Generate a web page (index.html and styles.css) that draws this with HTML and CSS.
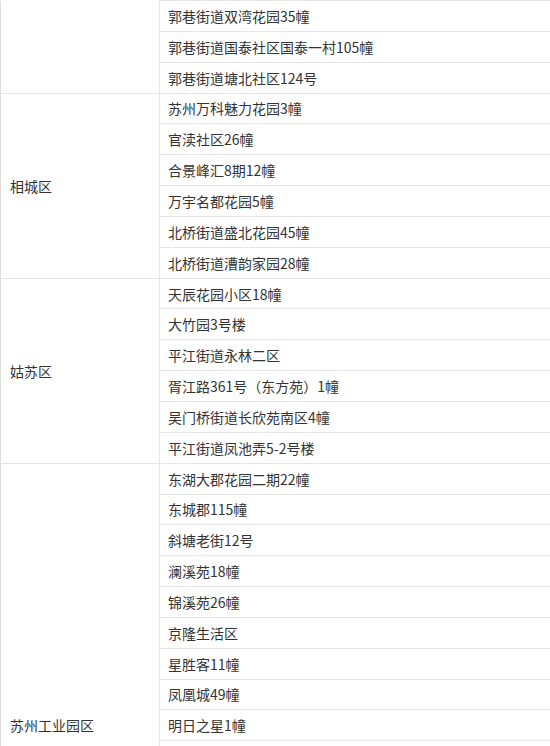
FILE: index.html
```html
<!DOCTYPE html>
<html lang="zh-CN">
<head>
<meta charset="utf-8">
<title>小区列表</title>
<link rel="stylesheet" href="styles.css">
</head>
<body>
<table class="list">
  <colgroup><col class="col-area"><col class="col-addr"></colgroup>
  <tbody>
    <tr><td class="area area-cont" rowspan="3"></td><td>郭巷街道双湾花园35幢</td></tr>
    <tr><td>郭巷街道国泰社区国泰一村105幢</td></tr>
    <tr><td>郭巷街道塘北社区124号</td></tr>

    <tr><td class="area" rowspan="6">相城区</td><td>苏州万科魅力花园3幢</td></tr>
    <tr><td>官渎社区26幢</td></tr>
    <tr><td>合景峰汇8期12幢</td></tr>
    <tr><td>万宇名都花园5幢</td></tr>
    <tr><td>北桥街道盛北花园45幢</td></tr>
    <tr><td>北桥街道漕韵家园28幢</td></tr>

    <tr><td class="area" rowspan="6">姑苏区</td><td>天辰花园小区18幢</td></tr>
    <tr><td>大竹园3号楼</td></tr>
    <tr><td>平江街道永林二区</td></tr>
    <tr><td>胥江路361号（东方苑）1幢</td></tr>
    <tr><td>吴门桥街道长欣苑南区4幢</td></tr>
    <tr><td>平江街道凤池弄5-2号楼</td></tr>

    <tr><td class="area" rowspan="17">苏州工业园区</td><td>东湖大郡花园二期22幢</td></tr>
    <tr><td>东城郡115幢</td></tr>
    <tr><td>斜塘老街12号</td></tr>
    <tr><td>澜溪苑18幢</td></tr>
    <tr><td>锦溪苑26幢</td></tr>
    <tr><td>京隆生活区</td></tr>
    <tr><td>星胜客11幢</td></tr>
    <tr><td>凤凰城49幢</td></tr>
    <tr><td>明日之星1幢</td></tr>
    <tr><td class="blank"></td></tr>
    <tr><td class="blank"></td></tr>
    <tr><td class="blank"></td></tr>
    <tr><td class="blank"></td></tr>
    <tr><td class="blank"></td></tr>
    <tr><td class="blank"></td></tr>
    <tr><td class="blank"></td></tr>
    <tr><td class="blank"></td></tr>
  </tbody>
</table>
</body>
</html>
```

FILE: styles.css
```css
html, body {
  margin: 0;
  padding: 0;
  background: #fff;
}

body {
  overflow: hidden;
  font-family: "Microsoft YaHei", "Noto Sans CJK SC", "Noto Sans", sans-serif;
  font-size: 14px;
  color: #333;
}

.list {
  border-collapse: collapse;
  table-layout: fixed;
  width: 551px;
}

.col-area {
  width: 159px;
}

.list tr {
  height: 30.85px;
}

.list td {
  padding: 0 8px;
  line-height: 20px;
  border-top: 1px solid #e5e5e5;
  border-bottom: 1px solid #e5e5e5;
  border-left: 1px solid #e5e5e5;
  white-space: nowrap;
  vertical-align: middle;
}

.list td.area {
  border-left: 1px solid #dcdcdc;
  padding-left: 9px;
}

.list td.area-cont {
  border-top: none;
}
```
